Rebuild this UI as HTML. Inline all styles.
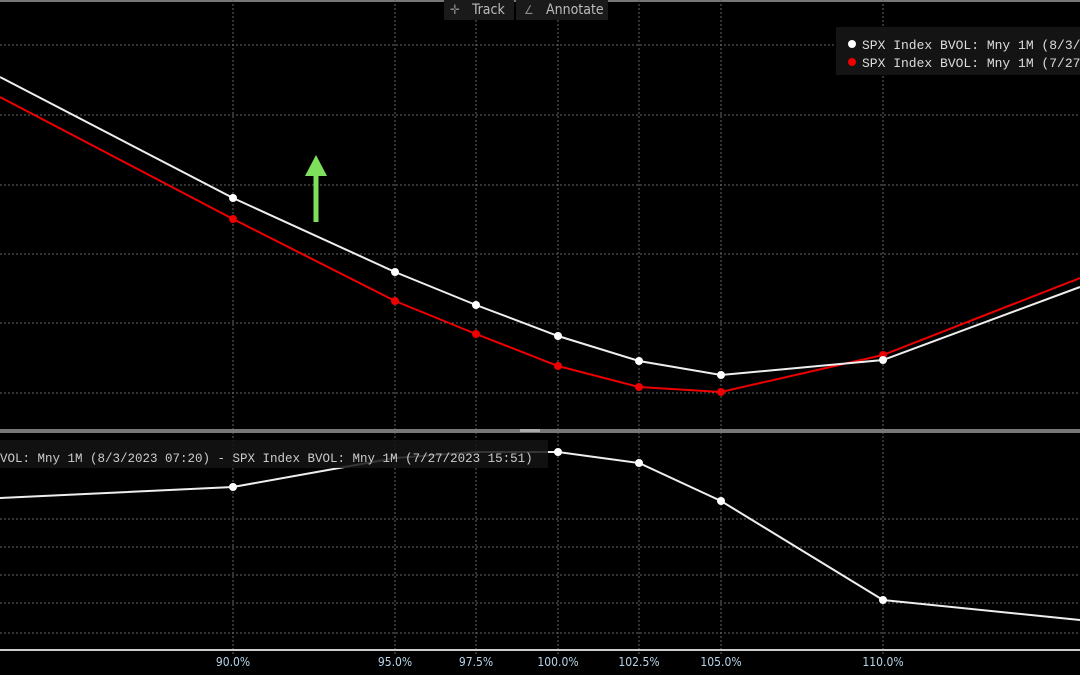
<!DOCTYPE html>
<html><head><style>
html,body{margin:0;padding:0;background:#000;width:1080px;height:675px;overflow:hidden}
svg{display:block}
text{font-family:"DejaVu Sans Condensed","Liberation Sans Narrow","Liberation Sans",sans-serif}
.m{font-family:"Liberation Mono",monospace}
</style></head><body>
<svg width="1080" height="675" viewBox="0 0 1080 675">
<rect width="1080" height="675" fill="#000"/>
<line x1="0" y1="1" x2="1080" y2="1" stroke="#777" stroke-width="2"/>
<g stroke="#666" stroke-width="1" stroke-dasharray="2,2">
<line x1="0" y1="45" x2="1080" y2="45"/><line x1="0" y1="115" x2="1080" y2="115"/>
<line x1="0" y1="185" x2="1080" y2="185"/><line x1="0" y1="254" x2="1080" y2="254"/>
<line x1="0" y1="323" x2="1080" y2="323"/><line x1="0" y1="393" x2="1080" y2="393"/>
<line x1="0" y1="519" x2="1080" y2="519"/><line x1="0" y1="547" x2="1080" y2="547"/>
<line x1="0" y1="575" x2="1080" y2="575"/><line x1="0" y1="603" x2="1080" y2="603"/>
<line x1="0" y1="633" x2="1080" y2="633"/>
<line x1="233" y1="0" x2="233" y2="655"/><line x1="395" y1="0" x2="395" y2="655"/>
<line x1="476" y1="0" x2="476" y2="655"/><line x1="558" y1="0" x2="558" y2="655"/>
<line x1="639" y1="0" x2="639" y2="655"/><line x1="721" y1="0" x2="721" y2="655"/>
<line x1="883" y1="0" x2="883" y2="655"/>
</g>
<rect x="0" y="429" width="1080" height="4" fill="#777"/>
<rect x="520" y="429" width="20" height="3" fill="#aaa"/>
<rect x="0" y="649" width="1080" height="2" fill="#ccc"/>
<rect x="444" y="0" width="70" height="20" fill="#1a1a1a"/>
<rect x="516" y="0" width="92" height="20" fill="#1a1a1a"/>
<text x="450" y="14" font-size="13" fill="#888">✛</text>
<text x="472" y="14" font-size="14" fill="#bbb">Track</text>
<text x="524" y="14" font-size="12" fill="#888">∠</text>
<text x="546" y="14" font-size="14" fill="#bbb">Annotate</text>
<rect x="836" y="27" width="244" height="48" fill="#141414"/>
<circle cx="852" cy="44" r="4" fill="#fff"/>
<circle cx="852" cy="62" r="4" fill="#e00"/>
<text class="m" x="862" y="49" font-size="13" fill="#ddd">SPX Index BVOL: Mny 1M (8/3/</text>
<text class="m" x="862" y="67" font-size="13" fill="#ddd">SPX Index BVOL: Mny 1M (7/27</text>
<polyline fill="none" stroke="#e00" stroke-width="2" points="0,97 233,219 395,301 476,334 558,366 639,387 721,392 883,355 1080,278"/>
<polyline fill="none" stroke="#eee" stroke-width="2" points="0,77 233,198 395,272 476,305 558,336 639,361 721,375 883,360 1080,287"/>
<g fill="#e00"><circle cx="233" cy="219" r="4"/><circle cx="395" cy="301" r="4"/><circle cx="476" cy="334" r="4"/><circle cx="558" cy="366" r="4"/><circle cx="639" cy="387" r="4"/><circle cx="721" cy="392" r="4"/><circle cx="883" cy="355" r="4"/></g>
<g fill="#fff"><circle cx="233" cy="198" r="4"/><circle cx="395" cy="272" r="4"/><circle cx="476" cy="305" r="4"/><circle cx="558" cy="336" r="4"/><circle cx="639" cy="361" r="4"/><circle cx="721" cy="375" r="4"/><circle cx="883" cy="360" r="4"/></g>
<line x1="316" y1="222" x2="316" y2="172" stroke="#7ee05a" stroke-width="5"/>
<polygon points="305,176 327,176 316,155" fill="#7ee05a"/>
<polyline fill="none" stroke="#eee" stroke-width="2" points="0,498 233,487 395,458 476,452 558,452 639,463 721,501 883,600 1080,620"/>
<rect x="0" y="440" width="548" height="28" fill="#141414" fill-opacity="0.85"/>
<text class="m" x="0" y="462" font-size="12.5" fill="#ccc">VOL: Mny 1M (8/3/2023 07:20) - SPX Index BVOL: Mny 1M (7/27/2023 15:51)</text>
<g fill="#fff"><circle cx="233" cy="487" r="4"/><circle cx="558" cy="452" r="4"/><circle cx="639" cy="463" r="4"/><circle cx="721" cy="501" r="4"/><circle cx="883" cy="600" r="4"/></g>
<g font-size="12" fill="#b8d4e8" text-anchor="middle">
<text x="233" y="666">90.0%</text><text x="395" y="666">95.0%</text><text x="476" y="666">97.5%</text>
<text x="558" y="666">100.0%</text><text x="639" y="666">102.5%</text><text x="721" y="666">105.0%</text>
<text x="883" y="666">110.0%</text></g>
</svg>
</body></html>
